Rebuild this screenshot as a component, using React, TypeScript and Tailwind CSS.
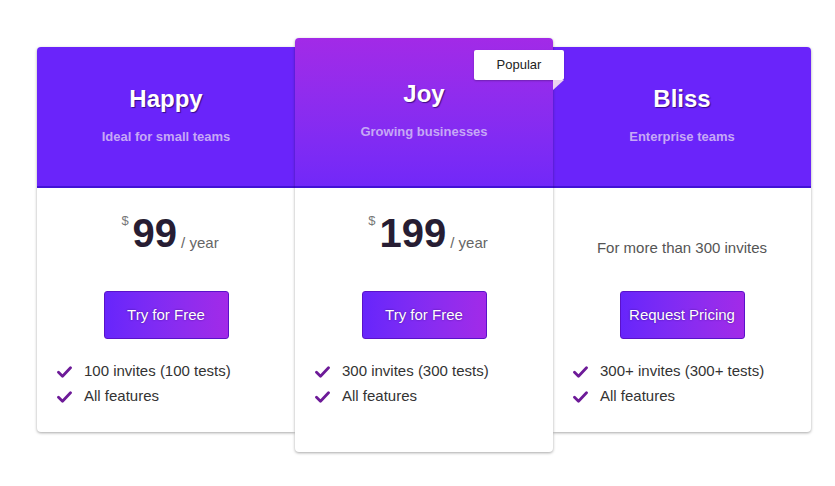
import React from 'react'

type Plan = {
  name: string
  tagline: string
  price?: string
  note?: string
  cta: string
  features: string[]
  featured?: boolean
}

const plans: Plan[] = [
  { name: 'Happy', tagline: 'Ideal for small teams', price: '99', cta: 'Try for Free', features: ['100 invites (100 tests)', 'All features'] },
  { name: 'Joy', tagline: 'Growing businesses', price: '199', cta: 'Try for Free', features: ['300 invites (300 tests)', 'All features'], featured: true },
  { name: 'Bliss', tagline: 'Enterprise teams', note: 'For more than 300 invites', cta: 'Request Pricing', features: ['300+ invites (300+ tests)', 'All features'] },
]

function Check() {
  return (
    <svg className="w-[15px] h-[12px] flex-shrink-0" viewBox="0 0 15 12" fill="none">
      <path d="M1.5 6.2l4 4L13.5 1.8" stroke="#6d1a98" strokeWidth={2.8} strokeLinecap="round" strokeLinejoin="round" />
    </svg>
  )
}

function PlanCard({ plan, pos }: { plan: Plan, pos: 'left' | 'mid' | 'right' }) {
  const mid = pos === 'mid'
  return (
    <div
      className={
        'w-[258px] flex-shrink-0 bg-white shadow-[0_1px_3px_rgba(0,0,0,0.35)] ' +
        (mid ? 'relative z-10 rounded-[4px]' : 'mt-[9px] ') +
        (pos === 'left' ? 'rounded-l-[4px]' : '') +
        (pos === 'right' ? 'rounded-r-[4px]' : '')
      }
    >
      <div
        className={
          'flex flex-col items-center justify-center pb-[4px] border-b-2 border-[#4212d6] ' +
          (mid
            ? 'h-[150px] rounded-t-[4px] bg-gradient-to-b from-[#a22ae7] to-[#7228f8]'
            : 'h-[141px] bg-[#6a24fa] ') +
          (pos === 'left' ? 'rounded-tl-[4px]' : '') +
          (pos === 'right' ? 'rounded-tr-[4px]' : '')
        }
      >
        <h2 className="text-white text-[24px] font-bold leading-none [text-shadow:1px_1px_1px_rgba(30,0,90,0.7)]">{plan.name}</h2>
        <p className="mt-[19px] text-[13px] font-bold leading-none text-[#c6a8f6]">{plan.tagline}</p>
      </div>

      {mid && (
        <div className="absolute left-[179px] top-[12px] z-20">
          <div className="w-[90px] h-[30px] bg-white rounded-[2px] shadow-[0_1px_2px_rgba(0,0,0,0.25)] flex items-center justify-center text-[13px] text-[#222]">
            Popular
          </div>
          <div className="ml-[79px] w-0 h-0 border-t-[10px] border-t-[#ead3ef] border-r-[11px] border-r-transparent" />
        </div>
      )}

      <div className={'px-[20px] ' + (mid ? 'pb-[43px]' : 'pb-[23px]')}>
        <div className="h-[103px]">
          {plan.price ? (
            <div className="pt-[25px] pl-[8px] flex items-start justify-center">
              <span className="text-[13px] text-[#777] leading-none mt-[1px] mr-[4px]">$</span>
              <span className="text-[40px] font-bold leading-[40px] text-[#271d33]">{plan.price}</span>
              <span className="text-[15px] text-[#666] leading-none mt-[22px] ml-[4px]">/ year</span>
            </div>
          ) : (
            <div className="pt-[48px] text-center text-[15px] leading-6 text-[#555]">{plan.note}</div>
          )}
        </div>
        <div className="flex justify-center">
          <button className="w-[125px] h-[48px] rounded-[3px] border border-[#5a12c9] bg-gradient-to-r from-[#6725fb] to-[#a22ae8] text-white text-[15px] [text-shadow:0_0_2px_rgba(40,0,100,0.7)]">
            {plan.cta}
          </button>
        </div>
        <ul className="mt-[20px]">
          {plan.features.map((f) => (
            <li key={f} className="flex items-center gap-[12px] h-[25px] text-[15px] text-[#333]">
              <Check />
              <span>{f}</span>
            </li>
          ))}
        </ul>
      </div>
    </div>
  )
}

export default function App() {
  return (
    <div className="w-[835px] h-[486px] bg-white font-['Liberation_Sans',Arial,sans-serif]">
      <div className="flex items-start pl-[37px] pt-[38px]">
        <PlanCard plan={plans[0]} pos="left" />
        <PlanCard plan={plans[1]} pos="mid" />
        <PlanCard plan={plans[2]} pos="right" />
      </div>
    </div>
  )
}
